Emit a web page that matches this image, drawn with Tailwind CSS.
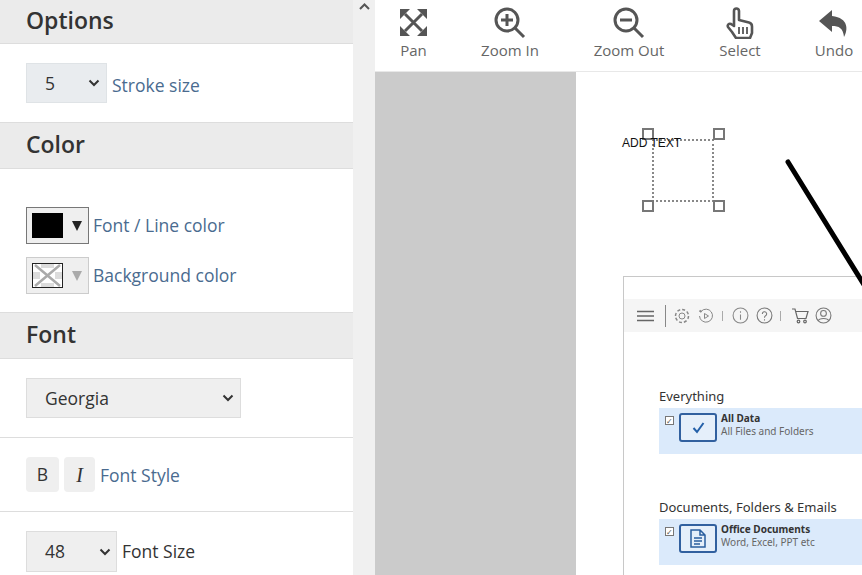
<!DOCTYPE html>
<html>
<head>
<meta charset="utf-8">
<script src="https://cdn.jsdelivr.net/npm/@tailwindcss/browser@4"></script>
</head>
<body class="m-0 overflow-hidden bg-white">
<div class="flex h-[575px] w-[862px] overflow-hidden font-['Open_Sans',sans-serif] text-[#333]">
  <!-- Sidebar -->
  <aside class="h-[575px] w-[353px] shrink-0 overflow-hidden bg-white">
    <div class="flex h-[44px] items-center border-b border-[#ddd] bg-[#ebebeb] pl-[26px] pb-[3px] text-[23px] font-semibold text-[#333]">Options</div>
    <div class="flex h-[78px] items-center pl-[26px] pb-[1px]">
      <div class="flex h-[40px] w-[81px] items-center justify-between border border-[#dfe3e6] bg-[#e9ecef] pl-[18px] pr-[6px] pt-[1px] text-[17.5px]"><span>5</span>
        <svg class="h-[8px] w-[12px]" viewBox="0 0 12 8" fill="none" stroke="#333" stroke-width="2"><path d="M1.500 1.500 6 6l4.500-4.500"/></svg></div>
      <span class="ml-[5px] pt-[5px] text-[17.5px] text-[#4a6b8f]">Stroke size</span>
    </div>
    <div class="flex h-[47px] items-center border-y border-[#ddd] bg-[#ebebeb] pl-[26px] pb-[2px] text-[23px] font-semibold">Color</div>
    <div class="flex h-[143px] flex-col gap-[13px] pl-[26px] pt-[38px]">
      <div class="flex h-[37px] items-center">
        <div class="flex h-[37px] w-[63px] items-center border border-[#777] bg-[#efefef] pl-[5px]">
          <div class="h-[25px] w-[31px] bg-black"></div>
          <svg class="ml-[9px] h-[10px] w-[10px]" viewBox="0 0 10 10"><path d="M0 0h10L5 10z" fill="#222"/></svg>
        </div>
        <span class="ml-[4px] text-[17.5px] text-[#4a6b8f]">Font / Line color</span>
      </div>
      <div class="flex h-[37px] items-center">
        <div class="flex h-[37px] w-[63px] items-center border border-[#ccc] bg-[#efefef] pl-[5px]">
          <svg class="h-[25px] w-[31px] border border-[#222] bg-white" viewBox="0 0 29 23" fill="none"><path d="M0 8h7v7H0zM22 8h7v7h-7zM8 0h13v4H8zM8 19h13v4H8z" fill="#dcdcdc"/><path d="M2 1l25 21M27 1 2 22" stroke="#aaa" stroke-width="2.500"/></svg>
          <svg class="ml-[9px] h-[10px] w-[10px]" viewBox="0 0 10 10"><path d="M0 0h10L5 10z" fill="#aaa"/></svg>
        </div>
        <span class="ml-[4px] text-[17.5px] text-[#4a6b8f]">Background color</span>
      </div>
    </div>
    <div class="flex h-[47px] items-center border-y border-[#ddd] bg-[#ebebeb] pl-[26px] pb-[2px] text-[23px] font-semibold">Font</div>
    <div class="flex h-[79px] items-center border-b border-[#ddd] pl-[26px] pb-[1px]">
      <div class="flex h-[40px] w-[215px] items-center justify-between border border-[#ddd] bg-[#efefef] pl-[18px] pr-[6px] pt-[1px] text-[17.5px]"><span>Georgia</span>
        <svg class="h-[8px] w-[12px]" viewBox="0 0 12 8" fill="none" stroke="#333" stroke-width="2"><path d="M1.500 1.500 6 6l4.500-4.500"/></svg></div>
    </div>
    <div class="flex h-[74px] items-center gap-[5px] border-b border-[#ddd] pl-[26px]">
      <div class="flex h-[35px] w-[33px] items-center justify-center rounded-[4px] bg-[#efefef] text-[17.5px]">B</div>
      <div class="flex h-[35px] w-[31px] items-center justify-center rounded-[4px] bg-[#efefef] font-['Liberation_Serif',serif] text-[20px] italic">I</div>
      <span class="pt-[2px] text-[17.5px] text-[#4a6b8f]">Font Style</span>
    </div>
    <div class="flex items-center pl-[26px] pt-[19px]">
      <div class="flex h-[41px] w-[91px] items-center justify-between border border-[#ddd] bg-[#efefef] pl-[18px] pr-[5px] text-[17.5px]"><span>48</span>
        <svg class="h-[8px] w-[12px]" viewBox="0 0 12 8" fill="none" stroke="#333" stroke-width="2"><path d="M1.500 1.500 6 6l4.500-4.500"/></svg></div>
      <span class="ml-[5px] text-[17.5px]">Font Size</span>
    </div>
  </aside>
  <!-- Sidebar scrollbar -->
  <div class="flex h-[575px] w-[22px] shrink-0 justify-center bg-[#f0f0f0] pt-[3px]">
    <svg class="h-[7px] w-[11px]" viewBox="0 0 11 7" fill="none" stroke="#555" stroke-width="2"><path d="M1 6 5.500 1.500 10 6"/></svg>
  </div>
  <!-- Main -->
  <main class="flex h-[575px] min-w-0 flex-1 flex-col">
    <div class="flex h-[72px] shrink-0 border-b border-[#e8e8e8] bg-white text-[15px] leading-[20px] text-[#666]">
      <div class="flex w-[77px] shrink-0 flex-col items-center pt-[8px]">
        <svg class="h-[29px] w-[29px]" viewBox="0 0 29 29" fill="#555" stroke="#555"><path d="M1 1h10L1 11zM28 1H18l10 10zM1 28h10L1 18zM28 28H18l10-10z" stroke="none"/><path d="M6 6l17 17M23 6 6 23" stroke-width="3" fill="none"/></svg>
        <span class="mt-[3px]">Pan</span>
      </div>
      <div class="flex w-[116px] shrink-0 flex-col items-center pt-[7px]">
        <svg class="h-[32px] w-[32px]" viewBox="0 0 32 32" fill="none" stroke="#555" stroke-width="3"><circle cx="13" cy="13" r="11"/><path d="M13 7v12M7 13h12" /><path d="M21 21l9 9" /></svg>
        <span class="mt-[1px]">Zoom In</span>
      </div>
      <div class="flex w-[122px] shrink-0 flex-col items-center pt-[7px]">
        <svg class="h-[32px] w-[32px]" viewBox="0 0 32 32" fill="none" stroke="#555" stroke-width="3"><circle cx="13" cy="13" r="11"/><path d="M7 13h12"/><path d="M21 21l9 9"/></svg>
        <span class="mt-[1px]">Zoom Out</span>
      </div>
      <div class="flex w-[100px] shrink-0 flex-col items-center pt-[7px]">
        <svg class="h-[32px] w-[28px]" viewBox="0 0 28 32" fill="#fff" stroke="#555" stroke-width="2.600" stroke-linejoin="round"><path d="M8 19V4a2.500 2.500 0 0 1 5 0v9l10 2.500c2 .5 3 2 3 4V26l-2 5H10l-4-6-4-5c-1-2 1-4 3-3z"/><path d="M13 20v7M17 20v7M21 20v7" stroke-width="1.800" fill="none"/></svg>
        <span class="mt-[1px]">Select</span>
      </div>
      <div class="-ml-[1px] flex w-[90px] shrink-0 flex-col items-center pt-[9px]">
        <svg class="h-[30px] w-[30px]" viewBox="0 0 30 30" fill="#555"><path d="M13 1 0 12l13 11v-6c7 0 11 2 12 11 4-7 5-19-12-21z"/></svg>
        <span class="mt-[1px]">Undo</span>
      </div>
    </div>
    <div class="flex min-h-0 flex-1">
      <div class="h-full w-[201px] shrink-0 bg-[#cbcbcb]"></div>
      <div class="relative -ml-[1px] h-full flex-1 overflow-hidden">
        <!-- Text selection -->
        <div class="absolute left-[77px] top-[67px] h-[63px] w-[62px] border-2 border-dotted border-[#888]"></div>
        <div class="absolute left-[67px] top-[56px] h-[12px] w-[12px] border-2 border-[#777] bg-white"></div>
        <div class="absolute left-[138px] top-[56px] h-[12px] w-[12px] border-2 border-[#777] bg-white"></div>
        <div class="absolute left-[67px] top-[128px] h-[12px] w-[12px] border-2 border-[#777] bg-white"></div>
        <div class="absolute left-[138px] top-[128px] h-[12px] w-[12px] border-2 border-[#777] bg-white"></div>
        <div class="absolute left-[47px] top-[63px] font-['Liberation_Sans',sans-serif] text-[12px] leading-[16px] whitespace-nowrap text-[#111]">ADD TEXT</div>
        <!-- Embedded screenshot -->
        <div class="absolute left-[48px] top-[204px] h-[320px] w-[300px] border-l border-t border-[#c8c8c8] bg-white">
          <div class="mt-[22px] flex h-[33px] items-center bg-[#f5f5f5] pl-[13px] text-[#777]">
            <svg class="h-[12px] w-[17px]" viewBox="0 0 17 12" stroke="#666" stroke-width="1.500"><path d="M0 1.500h17M0 6h17M0 10.500h17"/></svg>
            <div class="ml-[11px] h-[22px] w-[1px] bg-[#888]"></div>
            <svg class="ml-[8px] h-[16px] w-[16px]" viewBox="0 0 16 16" fill="none" stroke="#888"><circle cx="8" cy="8" r="3"/><circle cx="8" cy="8" r="6.500" stroke-dasharray="3 2" stroke-width="1.500"/></svg>
            <svg class="ml-[8px] h-[16px] w-[16px]" viewBox="0 0 16 16" fill="none" stroke="#888"><path d="M3 3.500A6.500 6.500 0 1 1 1.500 8"/><path d="M6.500 5.500v5l4-2.500z"/><path d="M1.500 2.500l2 1.500" stroke-width="2"/></svg>
            <div class="ml-[8px] h-[10px] w-[1px] bg-[#aaa]"></div>
            <svg class="ml-[9px] h-[17px] w-[17px]" viewBox="0 0 16 16" fill="none" stroke="#888"><circle cx="8" cy="8" r="7"/><path d="M8 7v5M8 4v1.500"/></svg>
            <svg class="ml-[7px] h-[17px] w-[17px]" viewBox="0 0 16 16" fill="none" stroke="#777"><circle cx="8" cy="8" r="7"/><path d="M6 6.500a2 2 0 1 1 3 1.700c-.7.400-1 .8-1 1.800M8 11.500v1.200"/></svg>
            <div class="ml-[7px] h-[10px] w-[1px] bg-[#aaa]"></div>
            <svg class="ml-[11px] h-[16px] w-[17px]" viewBox="0 0 17 16" fill="none" stroke="#666" stroke-width="1.200"><path d="M0 1h3l2.500 9.500H14l2-7H4"/><circle cx="6.500" cy="13.500" r="1.300"/><circle cx="13" cy="13.500" r="1.300"/></svg>
            <svg class="ml-[6px] h-[17px] w-[17px]" viewBox="0 0 16 16" fill="none" stroke="#777"><circle cx="8" cy="8" r="7"/><circle cx="8" cy="6" r="2.700"/><path d="M3 13c1-3 9-3 10 0"/></svg>
          </div>
          <div class="pl-[35px] pt-[55px] font-['Noto_Sans',sans-serif]">
            <div class="text-[13px] leading-[18px] text-[#333]">Everything</div>
            <div class="mt-[3px] flex h-[46px] items-start bg-[#dbeafb] pl-[6px] pt-[5px]">
              <div class="mt-[3px] flex h-[9px] w-[9px] items-center justify-center border border-[#777] bg-white text-[8px] leading-none text-[#555]">✓</div>
              <div class="ml-[5px] flex h-[29px] w-[38px] items-center justify-center rounded-[3px] border-2 border-[#31609f] bg-[#e5effa]">
                <svg class="h-[13px] w-[13px]" viewBox="0 0 13 13" fill="none" stroke="#2460a8" stroke-width="2"><path d="M1.500 7l3.500 4 6.500-9"/></svg>
              </div>
              <div class="ml-[4px] -mt-[1px] text-[10px] leading-[12.500px]"><div class="font-bold text-[#333]">All Data</div><div class="text-[#666]">All Files and Folders</div></div>
            </div>
            <div class="mt-[44px] text-[13px] leading-[18px] text-[#333]">Documents, Folders &amp; Emails</div>
            <div class="mt-[3px] flex h-[46px] items-start bg-[#dbeafb] pl-[6px] pt-[5px]">
              <div class="mt-[3px] flex h-[9px] w-[9px] items-center justify-center border border-[#777] bg-white text-[8px] leading-none text-[#555]">✓</div>
              <div class="ml-[5px] flex h-[29px] w-[38px] items-center justify-center rounded-[3px] border-2 border-[#31609f] bg-[#e5effa]">
                <svg class="h-[19px] w-[16px]" viewBox="0 0 16 19" fill="none" stroke="#2a5f9f" stroke-width="1.500"><path d="M1 1h9l5 5v12H1zM10 1v5h5M4 9h8M4 12h8M4 15h6"/></svg>
              </div>
              <div class="ml-[4px] -mt-[1px] text-[10px] leading-[12.500px]"><div class="font-bold text-[#333]">Office Documents</div><div class="text-[#666]">Word, Excel, PPT etc</div></div>
            </div>
          </div>
        </div>
        <!-- Line drawn over the picture -->
        <svg class="absolute left-[201px] top-[80px]" width="90" height="140" viewBox="0 0 90 140"><path d="M12 10 90 136" stroke="#000" stroke-width="5" stroke-linecap="round" fill="none"/></svg>
      </div>
    </div>
  </main>
</div>
</body>
</html>
